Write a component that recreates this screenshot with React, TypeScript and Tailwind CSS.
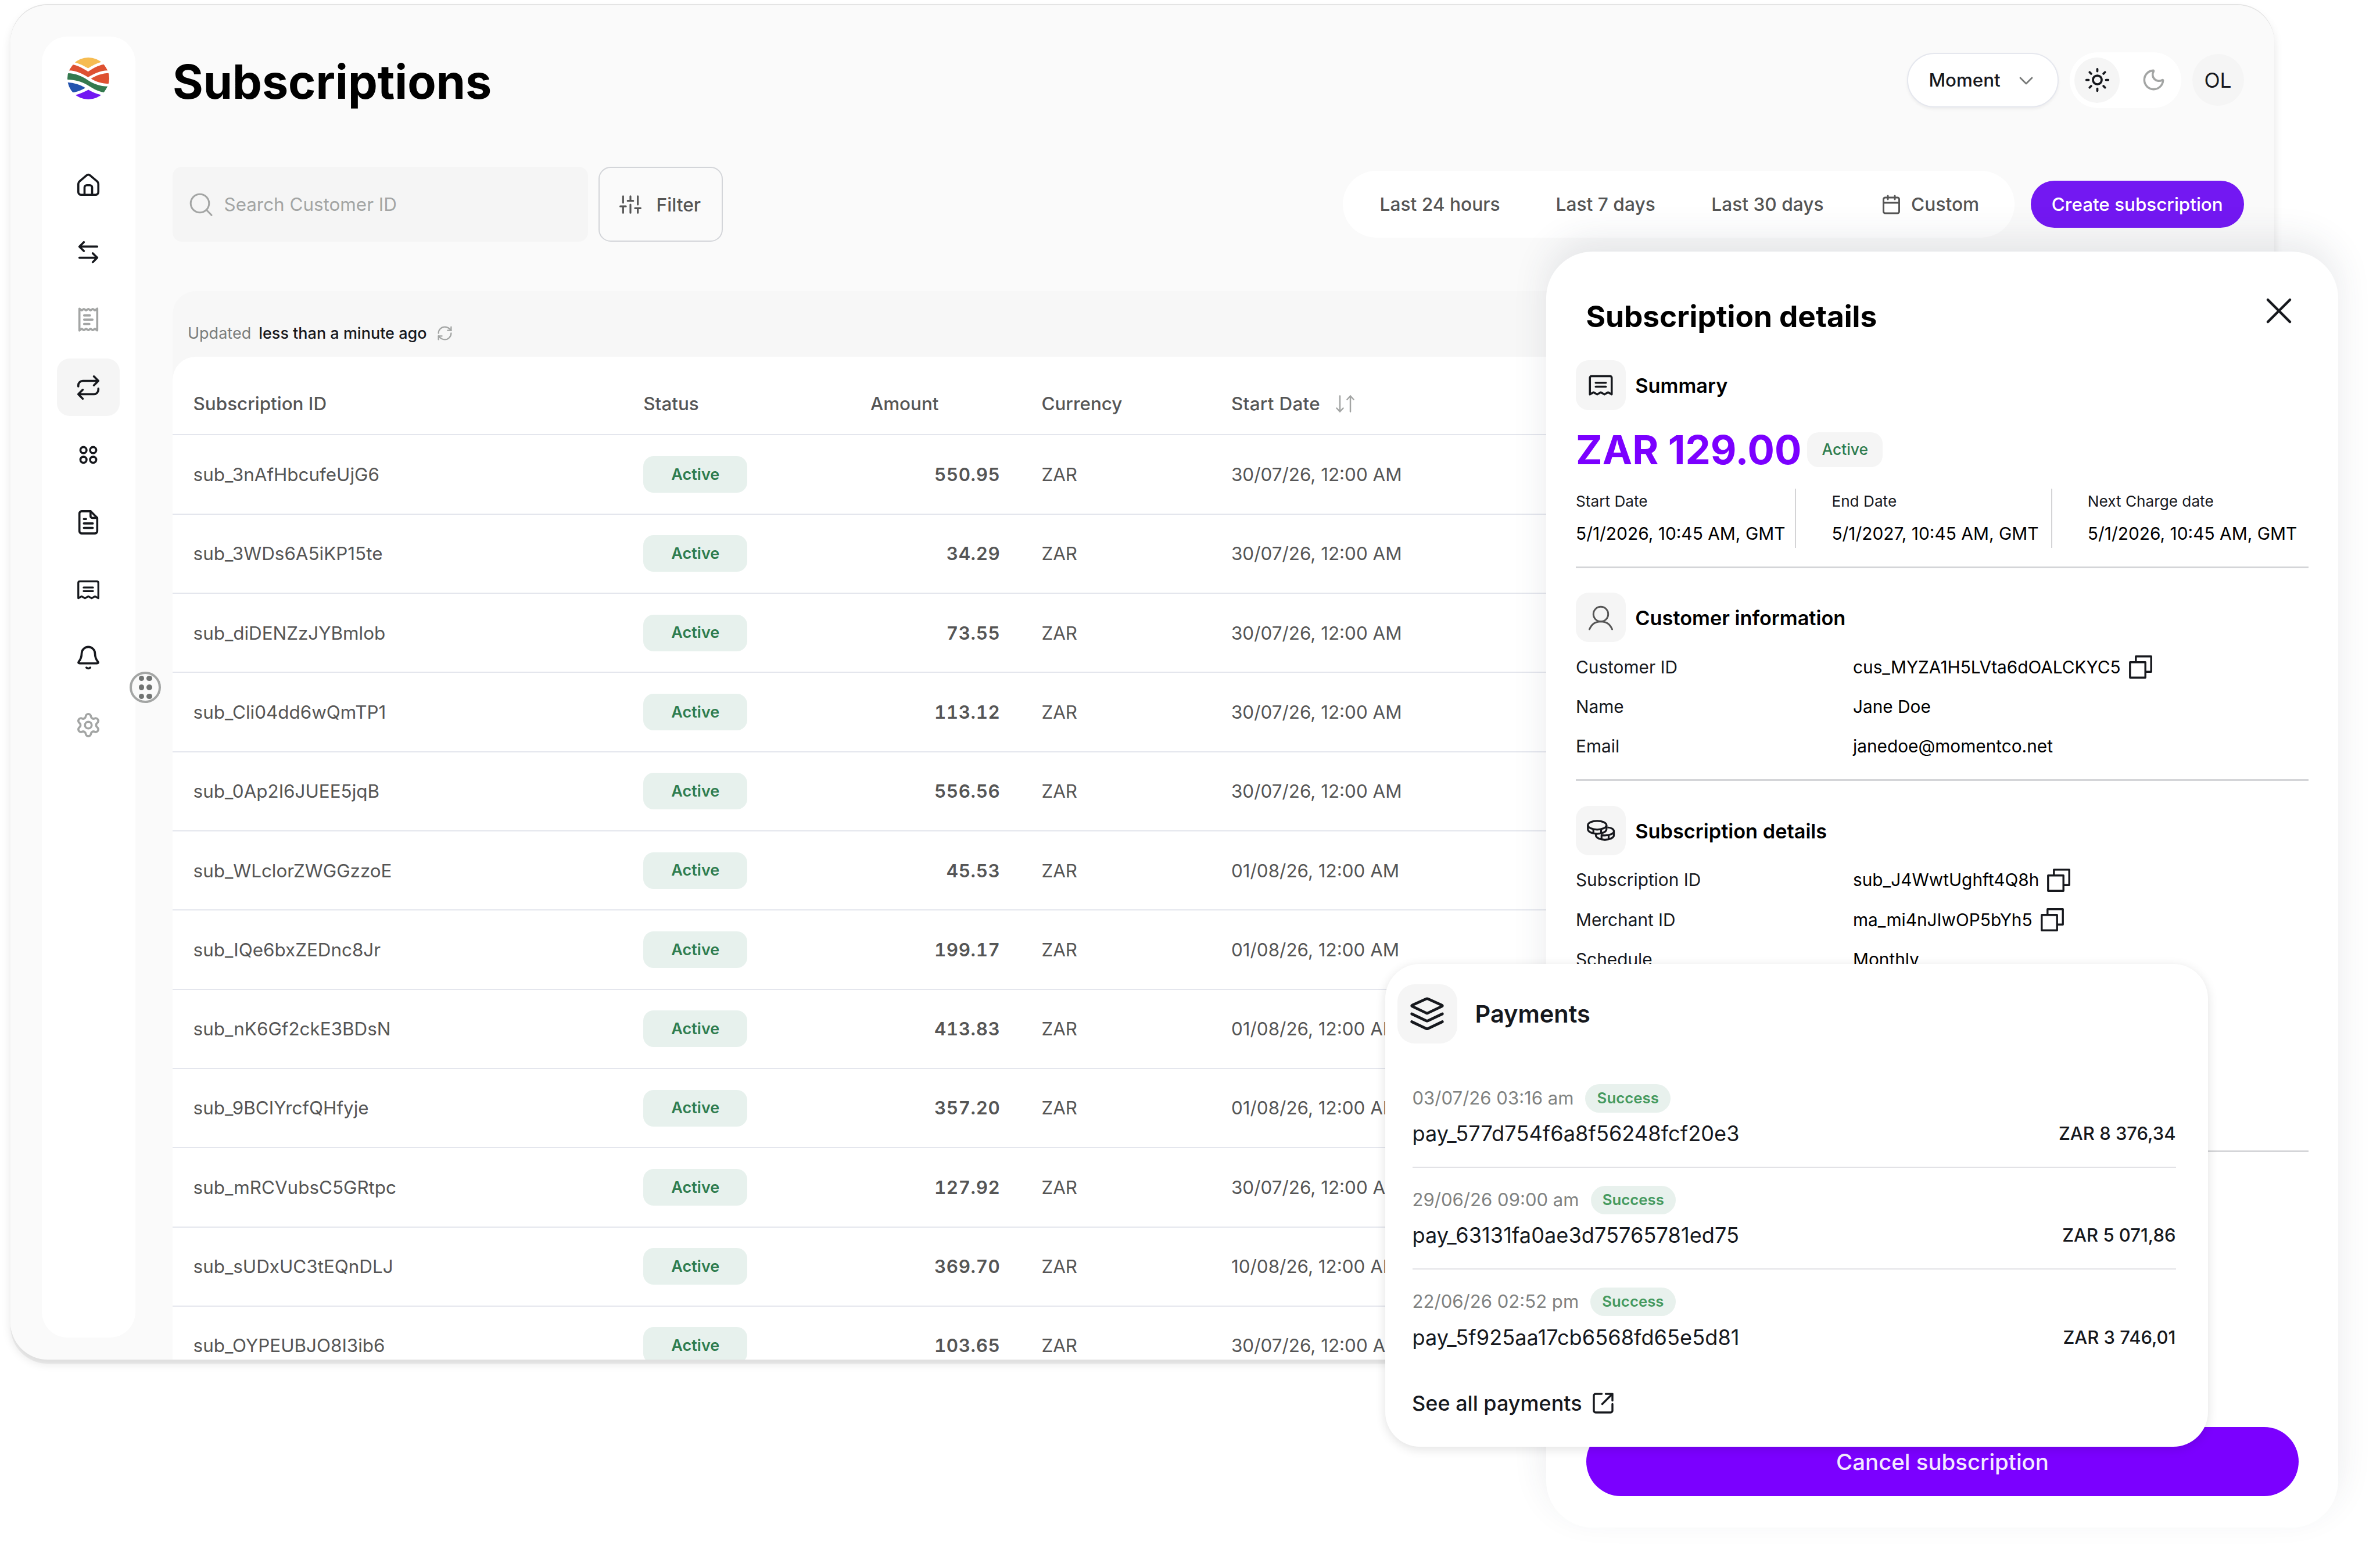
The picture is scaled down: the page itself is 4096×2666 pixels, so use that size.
import React, { ReactNode } from "react";
import { Calendar, Moon, RefreshCw, Settings, Sun } from "lucide-react";

const subscriptions = [
  { id: "sub_3nAfHbcufeUjG6", amount: "550.95", date: "30/07/26, 12:00 AM" },
  { id: "sub_3WDs6A5iKP15te", amount: "34.29", date: "30/07/26, 12:00 AM" },
  { id: "sub_diDENZzJYBmlob", amount: "73.55", date: "30/07/26, 12:00 AM" },
  { id: "sub_Cli04dd6wQmTP1", amount: "113.12", date: "30/07/26, 12:00 AM" },
  { id: "sub_0Ap2I6JUEE5jqB", amount: "556.56", date: "30/07/26, 12:00 AM" },
  { id: "sub_WLclorZWGGzzoE", amount: "45.53", date: "01/08/26, 12:00 AM" },
  { id: "sub_IQe6bxZEDnc8Jr", amount: "199.17", date: "01/08/26, 12:00 AM" },
  { id: "sub_nK6Gf2ckE3BDsN", amount: "413.83", date: "01/08/26, 12:00 AM" },
  { id: "sub_9BCIYrcfQHfyje", amount: "357.20", date: "01/08/26, 12:00 AM" },
  { id: "sub_mRCVubsC5GRtpc", amount: "127.92", date: "30/07/26, 12:00 AM" },
  { id: "sub_sUDxUC3tEQnDLJ", amount: "369.70", date: "10/08/26, 12:00 AM" },
  { id: "sub_OYPEUBJO8I3ib6", amount: "103.65", date: "30/07/26, 12:00 AM" },
];

const payments = [
  { date: "03/07/26 03:16 am", id: "pay_577d754f6a8f56248fcf20e3", amount: "ZAR 8 376,34" },
  { date: "29/06/26 09:00 am", id: "pay_63131fa0ae3d75765781ed75", amount: "ZAR 5 071,86" },
  { date: "22/06/26 02:52 pm", id: "pay_5f925aa17cb6568fd65e5d81", amount: "ZAR 3 746,01" },
];

function Line({ children, className = "size-[46px]", width = 1.9 }: { children: ReactNode; className?: string; width?: number }) {
  return (
    <svg viewBox="0 0 24 24" fill="none" stroke="currentColor" strokeWidth={width} strokeLinecap="round" strokeLinejoin="round" className={className}>
      {children}
    </svg>
  );
}

function Logo() {
  return (
    <svg viewBox="45 36 287 287" className="size-[72px]">
      <clipPath id="disc">
        <circle cx="188.5" cy="179.5" r="143.5" />
      </clipPath>
      <g clipPath="url(#disc)">
        <path fill="#f6bc52" d="M97 70C130 78 160 95 187 110C215 92 245 76 277 67L277 20H97Z" />
        <path fill="#de5131" d="M83 85C122 92 155 112 187 133C220 110 255 90 296 83L322 125C270 125 225 148 187 172C150 148 105 126 55 125Z" />
        <path fill="#34794e" d="M40 144H48C100 144 145 165 187 192C225 217 270 233 322 234L296 275C250 268 215 245 180 223C140 200 95 187 40 187Z" />
        <path fill="#de5131" d="M207 181C245 158 285 144 335 143V216C285 215 240 202 207 181Z" />
        <path fill="#2353ae" d="M40 206C90 208 130 222 168 244C140 260 115 272 82 275L40 260Z" />
        <path fill="#7318f2" d="M98 294C130 285 160 273 189 257C215 272 245 285 275 292L260 340H110Z" />
      </g>
    </svg>
  );
}

function ReceiptNote({ className = "size-[46px]" }: { className?: string }) {
  return (
    <Line className={className} width={1.7}>
      <path d="M3 19.6V5.8a1.3 1.3 0 0 1 1.3-1.3h15.4A1.3 1.3 0 0 1 21 5.8v13.8l-3-1.7-3 1.7-3-1.7-3 1.7-3-1.7z" />
      <path d="M7.8 10h8.4M7.8 13.2h8.4" />
    </Line>
  );
}

function Coins() {
  return (
    <svg viewBox="76 93 200 152" fill="none" stroke="currentColor" strokeWidth="13" strokeLinejoin="round" className="h-[38px] w-[50px]">
      <ellipse cx="151" cy="134" rx="64" ry="30" />
      <path d="M87 134v28c0 17 29 31 64 31s64-14 64-31v-28M125 164v27M178 164v27" />
      <path d="M221 149c27 1 45 12 45 27 0 16-28 28-62 28-10 0-20-1-28-4M266 176v27c0 17-28 31-62 31s-62-14-62-31v-9M181 202v28M230 202v28" />
    </svg>
  );
}

function Person() {
  return (
    <svg viewBox="0 0 44 44" fill="none" stroke="#555" strokeWidth="3" strokeLinecap="round" className="size-11">
      <circle cx="22" cy="16" r="12.7" />
      <path d="M2.5 42C6 33.500 13 28.700 22 28.700S38 33.500 41.500 42" />
    </svg>
  );
}

function CopyIcon() {
  return (
    <svg viewBox="0 0 40 40" fill="none" stroke="currentColor" strokeWidth="3.4" strokeLinejoin="round" className="size-10">
      <rect x="1.8" y="11.8" width="26.4" height="26.4" />
      <path d="M11.8 11.8V1.8h26.4v26.4H28.2" />
    </svg>
  );
}

const navItems: { icon: ReactNode; active?: boolean; muted?: boolean }[] = [
  {
    icon: (
      <Line>
        <path d="M3 11.200c0-1 .4-1.700 1.100-2.300l6.300-5.300a2.500 2.500 0 0 1 3.200 0l6.300 5.300c.7.600 1.100 1.300 1.100 2.300v7.300a2.500 2.500 0 0 1-2.500 2.500h-13A2.500 2.500 0 0 1 3 18.500z" />
        <path d="M8.600 21v-6.600a2 2 0 0 1 2-2h2.800a2 2 0 0 1 2 2V21" />
      </Line>
    ),
  },
  { icon: <Line><path d="M20 7H4M8 3 4 7l4 4M4 17h16M16 13l4 4-4 4" /></Line> },
  {
    muted: true,
    icon: (
      <Line>
        <path d="M4 2.200 6 3.700 8 2.500l2 1.200 2-1.200 2 1.200 2-1.200 2 1.200 2-1.500v19.600l-2-1.500-2 1.200-2-1.200-2 1.200-2-1.200-2 1.200-2-1.200-2 1.500z" />
        <path d="M8.200 8.300h5.300M8.200 12.100h7.600M8.200 16h4.800" />
      </Line>
    ),
  },
  {
    active: true,
    icon: <Line><path d="m17 2 4 4-4 4M3 11v-1a4 4 0 0 1 4-4h14M7 22l-4-4 4-4M21 13v1a4 4 0 0 1-4 4H3" /></Line>,
  },
  {
    icon: (
      <Line>
        <circle cx="7.65" cy="7.65" r="2.75" />
        <circle cx="16.35" cy="7.65" r="2.75" />
        <circle cx="7.65" cy="16.35" r="2.75" />
        <circle cx="16.35" cy="16.35" r="2.75" />
      </Line>
    ),
  },
  {
    icon: (
      <Line>
        <path d="M14 2H6a2 2 0 0 0-2 2v16a2 2 0 0 0 2 2h12a2 2 0 0 0 2-2V8z" />
        <path d="M14 2v4.500A1.500 1.500 0 0 0 15.500 8H20M8 9h2M8 13h8M8 17h8" />
      </Line>
    ),
  },
  { icon: <ReceiptNote /> },
  {
    icon: (
      <Line>
        <path d="M12 2.300a6 6 0 0 0-6 6c0 3.300-1 5.200-2.600 7.300-.6.800-.2 1.500.8 1.500h15.600c1 0 1.400-.7.8-1.500C19 13.500 18 11.600 18 8.300a6 6 0 0 0-6-6z" />
        <path d="M10.300 20.900c.9.900 2.500.9 3.400 0" />
      </Line>
    ),
  },
  { muted: true, icon: <Settings className="size-[46px]" strokeWidth={1.9} /> },
];

function Sidebar() {
  return (
    <aside className="ml-[54px] mt-[54px] flex h-[2239px] w-[161px] shrink-0 flex-col items-center rounded-[44px] bg-white pr-[2px] pt-[36px]">
      <Logo />
      <nav className="mt-[97.5px] flex flex-col gap-[17.77px]">
        {navItems.map((item, i) => (
          <a
            key={i}
            className={`flex h-[98.5px] w-[108px] items-center justify-center rounded-[22px] ${item.active ? "bg-[#f5f5f5]" : ""} ${item.muted ? "text-[#a3a5a4]" : "text-[#16181d]"}`}
          >
            {item.icon}
          </a>
        ))}
      </nav>
    </aside>
  );
}

function Header() {
  return (
    <header className="flex h-24 items-center justify-between">
      <h1 className="mt-2 text-[80.7px] font-bold leading-none text-black">Subscriptions</h1>
      <div className="flex items-center">
        <button className="flex h-[94px] w-[261px] items-center justify-between rounded-full border-2 border-[#e5e7ee] bg-white pl-[36px] pr-[42px] pt-[2px] text-[31.3px] font-medium text-[#16181d] shadow-[0_3px_5px_rgba(0,0,0,0.05)]">
          Moment
          <svg viewBox="0 0 24 14" fill="none" stroke="#777978" strokeWidth="2.8" strokeLinecap="round" strokeLinejoin="round" className="mt-px h-[14px] w-6">
            <path d="m2 2 10 10L22 2" />
          </svg>
        </button>
        <div className="ml-[19px] flex h-24 w-48 items-center rounded-full bg-white pl-[8.5px]">
          <span className="flex size-[78px] items-center justify-center rounded-full bg-[#f5f5f5] text-[#16181d]">
            <Sun className="size-[45px]" />
          </span>
          <Moon className="ml-[37px] size-[43px] text-[#a3a5a4]" />
        </div>
        <span className="ml-[19px] flex size-[89px] items-center justify-center rounded-full bg-[#f5f5f5] pt-[2px] text-[35.5px] text-[#16181d]">OL</span>
      </div>
    </header>
  );
}

function Controls() {
  return (
    <div className="mt-[101.3px] flex h-[129.5px] items-center">
      <div className="flex h-full w-[715px] items-center gap-[19.5px] rounded-[16px] bg-[#f5f5f5] pl-[29px] text-[31.4px] text-[#a3a5a4]">
        <svg viewBox="0 0 40 40" fill="none" stroke="currentColor" strokeWidth="3" strokeLinecap="round" className="size-10">
          <circle cx="18" cy="18" r="15.8" />
          <path d="m30 30 8 8.300" />
        </svg>
        <span className="pt-[2px]">Search Customer ID</span>
      </div>
      <button className="ml-[17.6px] flex h-[129px] w-[214.5px] items-center rounded-[21px] border-2 border-[#d3d5d9] pl-[34.5px] text-[31.7px] font-medium text-[#555]">
        <Line className="mr-[25.5px] size-[38px]" width={2}>
          <path d="M4 21v-7M4 10V3M12 21v-9M12 8V3M20 21v-5M20 12V3M1 14h6M9 8h6M17 16h6" />
        </Line>
        <span className="pt-[2px]">Filter</span>
      </button>
      <div className="ml-auto flex h-[115.5px] w-[1156px] items-center rounded-full bg-white pt-px text-[31.7px] font-medium text-[#555]">
        <span className="ml-[63.5px]">Last 24 hours</span>
        <span className="ml-[96px]">Last 7 days</span>
        <span className="ml-[96.5px]">Last 30 days</span>
        <Calendar className="ml-[98px] size-[36px]" />
        <span className="ml-[16.5px]">Custom</span>
      </div>
      <button className="ml-[28px] h-[80.5px] w-[366.5px] rounded-full bg-[#7318f2] pt-px text-[31.4px] font-medium text-white">Create subscription</button>
    </div>
  );
}

function SubscriptionTable() {
  return (
    <section className="mt-[84.5px] rounded-t-[40px] bg-[#f7f7f7]">
      <div className="flex h-[113.3px] items-center pl-[26px] pt-[31px] text-[27px] text-[#7a7d7c]">
        <span className="pt-[2px]">Updated</span>
        <span className="ml-[13px] pt-[2px] font-medium text-[#16181d]">less than a minute ago</span>
        <RefreshCw className="ml-[16px] size-[29px] text-[#a3a5a4]" strokeWidth={1.9} />
      </div>
      <div className="rounded-t-[40px] bg-white text-[31.4px] text-[#555]">
        <div className="grid h-[135.1px] grid-cols-[774.7px_390.7px_294.5px_326.5px_1fr] items-center border-b-2 border-[#e4e6ed] pl-[35.6px] pt-[29px] font-medium">
          <span>Subscription ID</span>
          <span>Status</span>
          <span>Amount</span>
          <span>Currency</span>
          <span className="flex items-center">
            <span className="tracking-[0.3px]">Start Date</span>
            <svg viewBox="0 0 32 30" fill="none" stroke="#a3a5a4" strokeWidth="2.5" strokeLinecap="round" strokeLinejoin="round" className="ml-[27px] h-[30px] w-8">
              <path d="M7 1.500v27M1.500 22.500l5.500 6 5.500-6M25 28.500v-27M19.500 7.500l5.500-6 5.500 6" />
            </svg>
          </span>
        </div>
        {subscriptions.map((s) => (
          <div key={s.id} className="grid h-[136.32px] grid-cols-[774.7px_390.7px_294.5px_326.5px_1fr] items-center border-b-2 border-[#e4e6ed] pl-[35.6px]">
            <span className="pt-[2px]">{s.id}</span>
            <span className="flex h-[63px] w-[179px] items-center justify-center rounded-[18px] bg-[#e7f1ed] pt-px text-[27px] font-semibold text-[#2f7d4f]">Active</span>
            <span className="pr-[71px] pt-[2px] text-right font-semibold tabular-nums tracking-[0.6px]">{s.amount}</span>
            <span className="pt-[2px]">ZAR</span>
            <span className="pt-[2px]">{s.date}</span>
          </div>
        ))}
      </div>
    </section>
  );
}

function SectionTitle({ icon, children }: { icon: ReactNode; children: ReactNode }) {
  return (
    <div className="flex h-[85.5px] items-center gap-[16.8px] text-[34.3px] font-semibold text-black">
      <span className="flex size-[85.5px] items-center justify-center rounded-[22px] bg-[#f5f5f5] text-[#16181d]">{icon}</span>
      <span className="pt-[2px]">{children}</span>
    </div>
  );
}

function Detail({ label, value, copy }: { label: string; value: string; copy?: boolean }) {
  return (
    <div className="flex h-[68.2px] items-center text-[29.8px] text-[#16181d]">
      <span className="w-[477px]">{label}</span>
      <span className="text-black">{value}</span>
      {copy && <span className="ml-[14px]"><CopyIcon /></span>}
    </div>
  );
}

function DateCell({ label, value, last }: { label: string; value: string; last?: boolean }) {
  return (
    <div className={`h-[102px] text-[#16181d] ${last ? "" : "mr-[61px] w-[379.4px] border-r-2 border-[#d4d4d6]"}`}>
      <div className="pt-px text-[26.2px] leading-[41px]">{label}</div>
      <div className="mt-[15px] whitespace-nowrap text-[29.9px] leading-[41px] text-black">{value}</div>
    </div>
  );
}

function DetailsPanel() {
  return (
    <aside className="absolute left-[2661px] top-[433px] flex h-[2196px] w-[1363px] flex-col rounded-[80px] bg-white px-[51px] pb-[54px] pt-[75px] shadow-[0_-24px_60px_rgba(50,55,80,0.1)]">
      <div className="flex h-[72px] pl-[17.5px] pr-[24px]">
        <h2 className="text-[51.3px] font-bold leading-[72px] text-black">Subscription details</h2>
        <svg viewBox="0 0 54 54" fill="none" stroke="#16181d" strokeWidth="4.5" strokeLinecap="round" className="ml-auto size-[54px]">
          <path d="m8 8 38 38M46 8 8 46" />
        </svg>
      </div>
      <div className="mt-[40px]">
        <SectionTitle icon={<ReceiptNote className="size-[50px]" />}>Summary</SectionTitle>
      </div>
      <div className="mt-[38px] flex h-[60px] items-center gap-[10px]">
        <span className="pt-px text-[68.9px] font-bold leading-none text-[#7b00ff]">ZAR 129.00</span>
        <span className="flex h-[60px] w-[129.6px] items-center justify-center rounded-[20px] bg-[#f5f5f5] text-[26.4px] font-medium text-[#2f7d4f]">Active</span>
      </div>
      <div className="mt-[37.8px] flex">
        <DateCell label="Start Date" value="5/1/2026, 10:45 AM, GMT" />
        <DateCell label="End Date" value="5/1/2027, 10:45 AM, GMT" />
        <DateCell label="Next Charge date" value="5/1/2026, 10:45 AM, GMT" last />
      </div>
      <hr className="mb-[42px] mt-[31.7px] border-0 border-t-3 border-[#d4d5d8]" />
      <SectionTitle icon={<Person />}>Customer information</SectionTitle>
      <div className="mt-[8.3px]">
        <Detail label="Customer ID" value="cus_MYZA1H5LVta6dOALCKYC5" copy />
        <Detail label="Name" value="Jane Doe" />
        <Detail label="Email" value="janedoe@momentco.net" />
      </div>
      <hr className="mb-[42.3px] mt-[23px] border-0 border-t-3 border-[#d4d5d8]" />
      <SectionTitle icon={<Coins />}>Subscription details</SectionTitle>
      <div className="mt-[8.6px]">
        <Detail label="Subscription ID" value="sub_J4WwtUghft4Q8h" copy />
        <Detail label="Merchant ID" value="ma_mi4nJIwOP5bYh5" copy />
        <Detail label="Schedule" value="Monthly" />
      </div>
      <hr className="mt-[295px] border-0 border-t-3 border-[#d4d5d8]" />
      <button className="mx-[17.5px] mt-auto h-[119px] rounded-full bg-[#7b00ff] pl-px pt-[3px] text-[38.4px] font-medium text-[#f3eaff]">Cancel subscription</button>
    </aside>
  );
}

function PaymentsCard() {
  return (
    <section className="absolute left-[2384px] top-[1659px] h-[830.5px] w-[1416px] rounded-[60px] bg-white pt-[34.5px] text-[#16181d] shadow-[0_4px_18px_rgba(0,0,0,0.12)]">
      <div className="ml-[21px] flex h-[102.5px] items-center gap-[31px] text-[41.5px] font-semibold">
        <span className="flex size-[102.5px] items-center justify-center rounded-[30px] bg-[#f5f5f5]">
          <svg viewBox="0 0 60 58" fill="none" stroke="currentColor" strokeWidth="4.7" strokeLinecap="round" strokeLinejoin="round" className="h-[58px] w-[60px]">
            <path d="M28.600 3.100 4.800 13.800c-1.600.7-1.600 1.700 0 2.400l23.800 11.300c.9.400 1.900.4 2.800 0l23.800-11.300c1.600-.7 1.600-1.700 0-2.400L31.400 3.100c-.9-.4-1.900-.4-2.800 0Z" />
            <path d="m3.600 29 25 11.800c.9.400 1.900.4 2.800 0l25-11.800M3.600 42.500l25 11.800c.9.400 1.900.4 2.800 0l25-11.800" />
          </svg>
        </span>
        Payments
      </div>
      <ul className="ml-[46.5px] mt-[38.5px] w-[1314px]">
        {payments.map((p, i) => (
          <li key={p.id} className={`h-[175.4px] pt-[31px] ${i < 2 ? "border-b-2 border-[#e2e2e6]" : ""}`}>
            <div className="flex h-[49px] items-center gap-[20px] text-[31.1px] text-[#7f8281]">
              {p.date}
              <span className="flex h-[49px] w-[146.5px] items-center justify-center rounded-full bg-[#e8f1ed] text-[25.8px] font-semibold text-[#459a5f]">Success</span>
            </div>
            <div className="mt-[11.5px] flex h-[50px] items-center justify-between">
              <span className="text-[36.1px] tracking-[0.08px]">{p.id}</span>
              <span className="text-[31px] font-medium">{p.amount}</span>
            </div>
          </li>
        ))}
      </ul>
      <a className="ml-[46px] mt-[29px] flex h-[50px] items-center gap-[18px] text-[36px] font-medium">
        See all payments
        <svg viewBox="0 0 36 36" fill="none" stroke="currentColor" strokeWidth="3.4" strokeLinecap="round" strokeLinejoin="round" className="size-9">
          <path d="M15.500 2H5a3 3 0 0 0-3 3v26a3 3 0 0 0 3 3h26a3 3 0 0 0 3-3V19.500M22.500 2H34v11.500M34 2 16.500 19.500" />
        </svg>
      </a>
    </section>
  );
}

export default function App() {
  return (
    <div className="relative h-[2666px] w-[4096px] overflow-hidden bg-white pl-[18px] pt-[10px] font-['Inter',sans-serif]">
      <div className="h-[2330px] w-[3896px] rounded-[64px] shadow-[0_-2px_0_#e4e4e4,0_8px_0_rgba(0,0,0,0.05),0_8px_16px_rgba(0,0,0,0.1)]">
        <div className="-mt-px flex h-[2331px] overflow-hidden rounded-[64px] bg-[#fafafa]">
          <Sidebar />
          <main className="ml-[64px] w-[3564.5px] shrink-0 pt-[80.7px]">
            <Header />
            <Controls />
            <SubscriptionTable />
          </main>
        </div>
      </div>
      <div className="absolute left-[223px] top-[1156px] grid size-[54px] grid-cols-[9.5px_9.5px] place-content-center gap-x-1 gap-y-[6px] rounded-full border-4 border-[#a3a5a4] bg-[#fafafa]">
        {Array.from({ length: 6 }, (_, i) => (
          <span key={i} className="size-[9.5px] rounded-full bg-[#707372]" />
        ))}
      </div>
      <DetailsPanel />
      <PaymentsCard />
    </div>
  );
}
